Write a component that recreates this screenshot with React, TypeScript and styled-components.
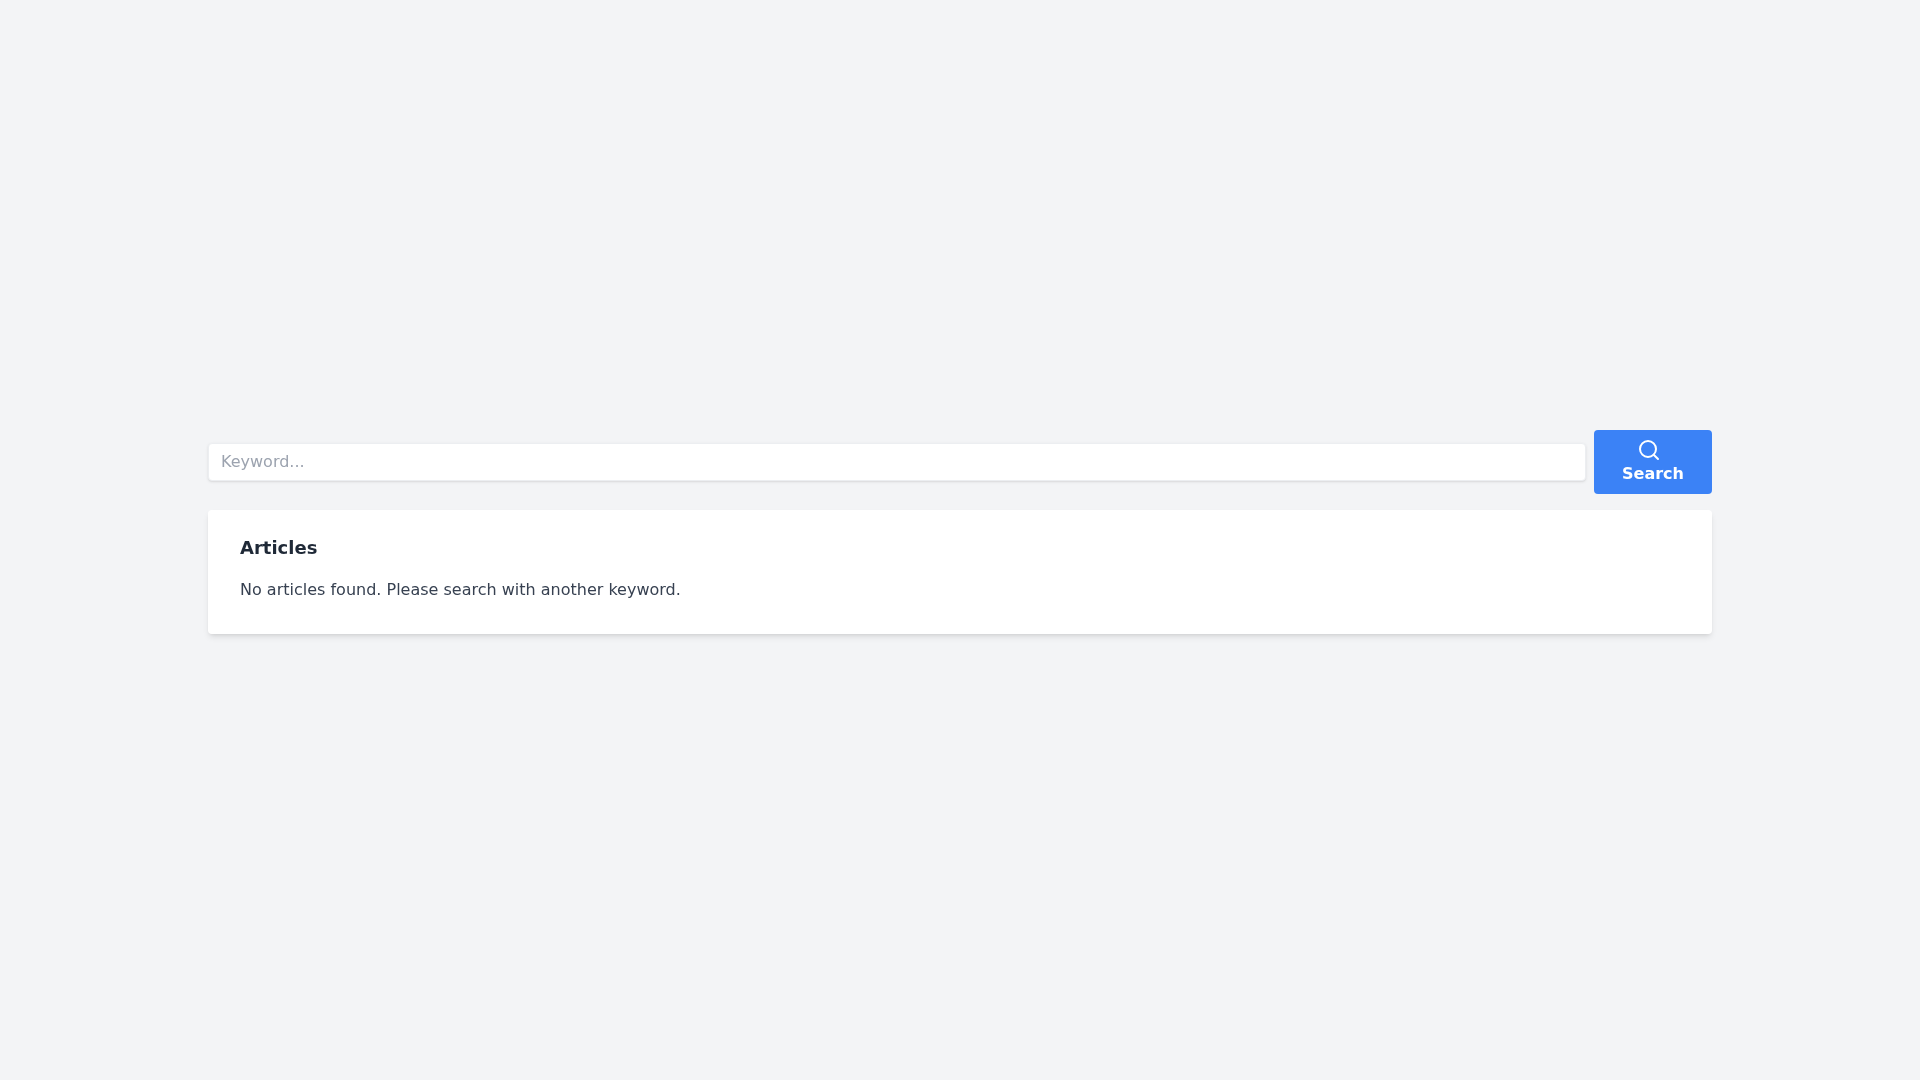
import React from "react";
import styled, { createGlobalStyle } from "styled-components";

const Global = createGlobalStyle`
  html, body { margin: 0; padding: 0; }
  * { box-sizing: border-box; }
  body { background: #f3f4f6; font-family: "DejaVu Sans", sans-serif; color: #1f2937; }
`;

const Page = styled.main`
  min-height: 1080px;
  display: flex;
  flex-direction: column;
  justify-content: center;
  width: 1504px;
  margin: 0 auto;
  will-change: transform;
`;

const SearchRow = styled.form`
  display: flex;
  align-items: center;
  gap: 8px;
  margin-bottom: 16px;
`;

const Input = styled.input`
  flex: 1;
  height: 38px;
  padding: 0 12px 1px;
  border: 1px solid #eceef1;
  border-radius: 4px;
  background: #fff;
  font: 16px "DejaVu Sans", sans-serif;
  color: #1f2937;
  box-shadow: 0 1px 3px rgba(0,0,0,.1), 0 1px 2px -1px rgba(0,0,0,.1);
  &::placeholder { color: #9ca3af; opacity: 1; }
`;

const Button = styled.button`
  width: 118px;
  height: 64px;
  padding: 8px 28px;
  display: block;
  text-align: center;
  border: 0;
  border-radius: 4px;
  background: #3b82f6;
  color: #fff;
  font: 700 16px/24px "DejaVu Sans", sans-serif;
`;

const ButtonIcon = styled.svg`
  display: block;
  width: 24px;
  height: 24px;
  margin-left: 15px;
  fill: none;
  stroke: currentColor;
  stroke-width: 2;
  stroke-linecap: round;
  stroke-linejoin: round;
`;

const Card = styled.section`
  background: #fff;
  border-radius: 4px;
  padding: 24px 32px 32px;
  margin-bottom: 16px;
  box-shadow: 0 4px 6px -1px rgba(0,0,0,.1), 0 2px 4px -2px rgba(0,0,0,.1);
`;

const Title = styled.h2`
  margin: 0 0 16px;
  font-size: 18px;
  line-height: 28px;
  font-weight: 700;
  color: #1f2937;
`;

const Message = styled.p`
  margin: 0;
  font-size: 16px;
  line-height: 24px;
  color: #374151;
`;

export default function App() {
  return (
    <>
      <Global />
      <Page>
        <SearchRow onSubmit={(e) => e.preventDefault()}>
          <Input placeholder="Keyword..." />
          <Button type="submit">
            <ButtonIcon viewBox="0 0 24 24">
              <circle cx="11" cy="11" r="8" />
              <path d="m21 21-4.3-4.3" />
            </ButtonIcon>
            Search
          </Button>
        </SearchRow>
        <Card>
          <Title>Articles</Title>
          <Message>No articles found. Please search with another keyword.</Message>
        </Card>
      </Page>
    </>
  );
}
